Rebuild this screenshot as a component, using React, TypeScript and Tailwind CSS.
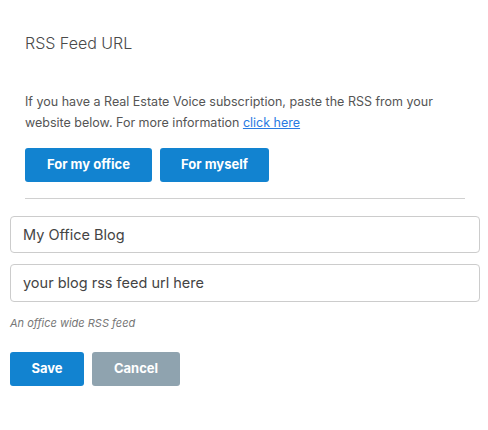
import React from 'react';

export default function App() {
    return (
        <div className="w-[488px] h-[430px] bg-white font-['Inter',sans-serif] text-[#555]">
            <div className="pl-[10px] pr-[8px] pt-[33px]">
                <div className="px-[15px]">
                    <h2 className="text-[16px] font-light text-[#4a4a4a] leading-[20px]">RSS Feed URL</h2>
                    <p className="mt-[38px] text-[12.5px] leading-[21px] text-[#555]">
                        If you have a Real Estate Voice subscription, paste the RSS from your website below. For more information{' '}
                        <a href="#" className="text-[#2a7ae2] underline">click here</a>
                    </p>
                    <div className="mt-[15px] flex gap-[8px]">
                        <button className="w-[127px] h-[34px] rounded-[3px] bg-[#1283d0] text-white text-[13px] font-bold">For my office</button>
                        <button className="w-[109px] h-[34px] rounded-[3px] bg-[#1283d0] text-white text-[13px] font-bold">For myself</button>
                    </div>
                    <div className="mt-[16px] w-[440px] border-t border-[#d0d0d0]" />
                </div>
                <div className="mt-[17px] flex flex-col gap-[11px]">
                    <div className="h-[37px] w-[470px] rounded-[4px] border border-[#ccc] px-[12px] flex items-center text-[14.5px] text-[#444]">My Office Blog</div>
                    <div className="h-[38px] w-[470px] rounded-[4px] border border-[#ccc] px-[12px] flex items-center text-[14.5px] text-[#444]">your blog rss feed url here</div>
                </div>
                <p className="mt-[13px] text-[11px] italic text-[#777]">An office wide RSS feed</p>
                <div className="mt-[20px] flex gap-[8px]">
                    <button className="w-[74px] h-[34px] rounded-[3px] bg-[#1283d0] text-white text-[13px] font-bold">Save</button>
                    <button className="w-[88px] h-[34px] rounded-[3px] bg-[#8fa3af] text-white text-[13px] font-bold">Cancel</button>
                </div>
            </div>
        </div>
    );
}
